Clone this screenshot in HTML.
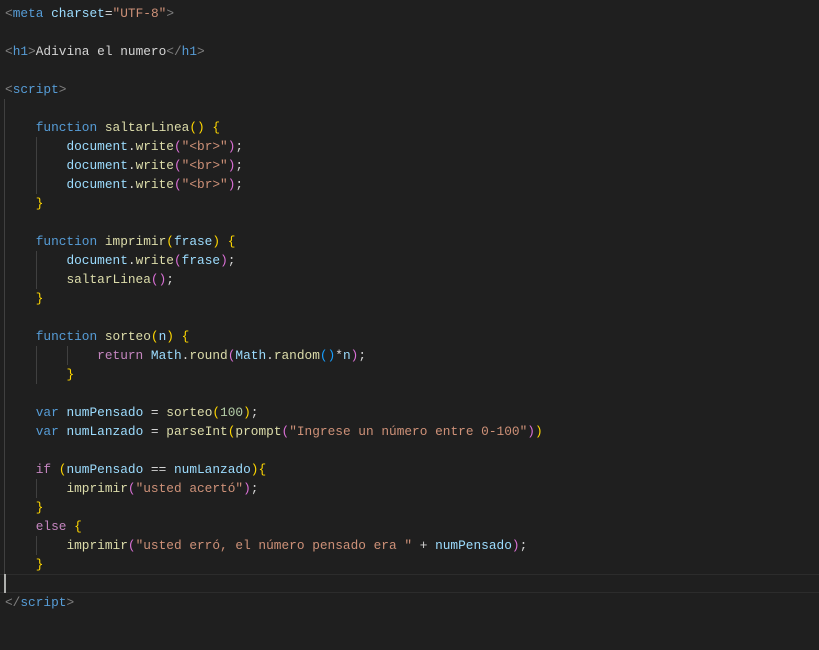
<!DOCTYPE html>
<html><head><meta charset="UTF-8"><style>
html,body{margin:0;padding:0;background:#1f1f1f;width:819px;height:650px;overflow:hidden}
pre{position:absolute;left:5px;top:4px;margin:0;font-family:"Liberation Mono",monospace;font-size:12.8px;line-height:19px;color:#d4d4d4;white-space:pre}
.g{color:#808080}.t{color:#569cd6}.a{color:#9cdcfe}.s{color:#ce9178}.f{color:#dcdcaa}.k{color:#c586c0}.n{color:#b5cea8}
.y{color:#ffd700}.p{color:#da70d6}.b{color:#179fff}
.v{position:absolute;width:1px;background:#404040}
</style></head><body>
<div style="position:absolute;left:0;top:574px;width:819px;height:17px;border-top:1px solid #2c2c2c;border-bottom:1px solid #2c2c2c"></div>
<div style="position:absolute;left:4px;top:574px;width:2px;height:19px;background:#aeafad"></div>
<div class="v" style="left:4px;top:99px;height:475px"></div>
<div class="v" style="left:36px;top:137px;height:57px"></div>
<div class="v" style="left:36px;top:251px;height:38px"></div>
<div class="v" style="left:36px;top:346px;height:38px"></div>
<div class="v" style="left:67px;top:346px;height:19px"></div>
<div class="v" style="left:36px;top:479px;height:19px"></div>
<div class="v" style="left:36px;top:536px;height:19px"></div>
<pre><span class="g">&lt;</span><span class="t">meta</span> <span class="a">charset</span>=<span class="s">"UTF-8"</span><span class="g">&gt;</span>

<span class="g">&lt;</span><span class="t">h1</span><span class="g">&gt;</span>Adivina el numero<span class="g">&lt;/</span><span class="t">h1</span><span class="g">&gt;</span>

<span class="g">&lt;</span><span class="t">script</span><span class="g">&gt;</span>

    <span class="t">function</span> <span class="f">saltarLinea</span><span class="y">()</span> <span class="y">{</span>
        <span class="a">document</span>.<span class="f">write</span><span class="p">(</span><span class="s">"&lt;br&gt;"</span><span class="p">)</span>;
        <span class="a">document</span>.<span class="f">write</span><span class="p">(</span><span class="s">"&lt;br&gt;"</span><span class="p">)</span>;
        <span class="a">document</span>.<span class="f">write</span><span class="p">(</span><span class="s">"&lt;br&gt;"</span><span class="p">)</span>;
    <span class="y">}</span>

    <span class="t">function</span> <span class="f">imprimir</span><span class="y">(</span><span class="a">frase</span><span class="y">)</span> <span class="y">{</span>
        <span class="a">document</span>.<span class="f">write</span><span class="p">(</span><span class="a">frase</span><span class="p">)</span>;
        <span class="f">saltarLinea</span><span class="p">()</span>;
    <span class="y">}</span>

    <span class="t">function</span> <span class="f">sorteo</span><span class="y">(</span><span class="a">n</span><span class="y">)</span> <span class="y">{</span>
            <span class="k">return</span> <span class="a">Math</span>.<span class="f">round</span><span class="p">(</span><span class="a">Math</span>.<span class="f">random</span><span class="b">()</span>*<span class="a">n</span><span class="p">)</span>;
        <span class="y">}</span>

    <span class="t">var</span> <span class="a">numPensado</span> = <span class="f">sorteo</span><span class="y">(</span><span class="n">100</span><span class="y">)</span>;
    <span class="t">var</span> <span class="a">numLanzado</span> = <span class="f">parseInt</span><span class="y">(</span><span class="f">prompt</span><span class="p">(</span><span class="s">"Ingrese un número entre 0-100"</span><span class="p">)</span><span class="y">)</span>

    <span class="k">if</span> <span class="y">(</span><span class="a">numPensado</span> == <span class="a">numLanzado</span><span class="y">){</span>
        <span class="f">imprimir</span><span class="p">(</span><span class="s">"usted acertó"</span><span class="p">)</span>;
    <span class="y">}</span>
    <span class="k">else</span> <span class="y">{</span>
        <span class="f">imprimir</span><span class="p">(</span><span class="s">"usted erró, el número pensado era "</span> + <span class="a">numPensado</span><span class="p">)</span>;
    <span class="y">}</span>

<span class="g">&lt;/</span><span class="t">script</span><span class="g">&gt;</span></pre>
</body></html>
